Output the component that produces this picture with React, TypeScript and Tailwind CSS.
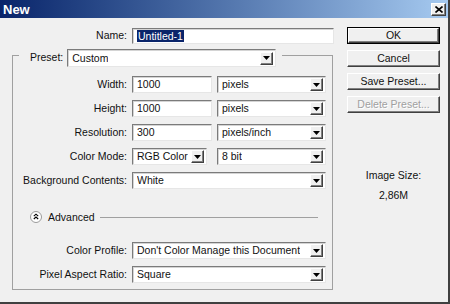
import React from 'react';

// sunken 3D edge used by text fields and combos
const sunken =
  'bg-white border border-t-[#7b7b7b] border-l-[#7b7b7b] border-b-[#e6e6e6] border-r-[#e6e6e6] shadow-[inset_1px_1px_0_#d4d4d4]';

const raised =
  'bg-[#f0f0f0] border border-t-white border-l-white border-b-[#404040] border-r-[#404040] shadow-[inset_-1px_-1px_0_#808080]';

function ArrowBox() {
  return (
    <div className={`${raised} w-[13px] h-[13px] flex items-center justify-center shrink-0`}>
      <svg width="7" height="4" viewBox="0 0 7 4">
        <path d="M0 0h7L3.5 4z" fill="#000" />
      </svg>
    </div>
  );
}

function Field({ value, width }: { value: string; width: string }) {
  return (
    <div className={`${sunken} ${width} h-[17px] flex items-center pl-[4px] leading-none`}>{value}</div>
  );
}

function Combo({ value, width, h = 'h-[17px]' }: { value: string; width: string; h?: string }) {
  return (
    <div className={`${sunken} ${width} ${h} flex items-center justify-between pl-[4px] pr-[2px] leading-none`}>
      <span className="truncate">{value}</span>
      <ArrowBox />
    </div>
  );
}

function Row({ label, children }: { label: string; children: React.ReactNode }) {
  return (
    <div className="flex items-center h-[17px]">
      <div className="w-[115px] text-right pr-[1px] whitespace-nowrap">{label}</div>
      <div className="ml-[4px] flex items-center gap-[5px]">{children}</div>
    </div>
  );
}

function Button({ label, primary, disabled }: { label: string; primary?: boolean; disabled?: boolean }) {
  const inner = (
    <div
      className={`${raised} h-full w-full flex items-center justify-center leading-none ${
        disabled ? 'text-[#a0a0a0] [text-shadow:1px_1px_0_#fff]' : ''
      }`}
    >
      {label}
    </div>
  );
  return primary ? (
    <div className="h-[17px] w-[93px] border border-black">{inner}</div>
  ) : (
    <div className="h-[17px] w-[93px]">{inner}</div>
  );
}

export default function App() {
  return (
    <div className="w-[450px] h-[304px] bg-[#f0f0f0] border-r-2 border-b-2 border-[#404040] flex flex-col font-['Liberation_Sans',Arial,sans-serif] text-[10.5px] text-[#111] overflow-hidden">
      {/* title bar */}
      <div className="h-[18px] shrink-0 bg-gradient-to-r from-[#0a246a] to-[#a6caf0] flex items-center justify-between pl-[3px] pr-[2px]">
        <span className="text-white font-bold text-[13px] leading-none">New</span>
        <div className={`${raised} w-[15px] h-[13px] flex items-center justify-center`}>
          <svg width="8" height="7" viewBox="0 0 8 7">
            <path d="M0.5 0.5l7 6M7.5 0.5l-7 6" stroke="#000" strokeWidth="1.6" />
          </svg>
        </div>
      </div>

      <div className="flex flex-1">
        {/* left column */}
        <div className="ml-[12px] w-[322px] flex flex-col">
          <div className="mt-[10px] flex items-center h-[16px]">
            <div className="w-[116px] text-right pr-[1px]">Name:</div>
            <div className={`${sunken} ml-[4px] w-[202px] h-[16px] flex items-center pl-[4px]`}>
              <span className="bg-[#0a246a] text-white leading-[12px] px-px">Untitled-1</span>
            </div>
          </div>

          {/* preset group */}
          <div className="mt-[5px] w-[321px] flex flex-col">
            <div className="flex items-start">
              <div className="w-[7px] h-[12px] mt-[6px] border-t border-l border-[#a0a0a0]" />
              <div className="ml-[11px] flex items-center h-[18px]">
                <span>Preset:</span>
                <div className="ml-[4px]">
                  <Combo value="Custom" width="w-[209px]" h="h-[18px]" />
                </div>
              </div>
              <div className="ml-[6px] flex-1 h-[12px] mt-[6px] border-t border-r border-[#a0a0a0]" />
            </div>
            <div className="border-l border-r border-b border-[#a0a0a0] pt-[9px] pb-[6px] flex flex-col">
              <div className="flex flex-col gap-[7px]">
                <Row label="Width:">
                  <Field value="1000" width="w-[80px]" />
                  <Combo value="pixels" width="w-[109px]" />
                </Row>
                <Row label="Height:">
                  <Field value="1000" width="w-[80px]" />
                  <Combo value="pixels" width="w-[109px]" />
                </Row>
                <Row label="Resolution:">
                  <Field value="300" width="w-[80px]" />
                  <Combo value="pixels/inch" width="w-[109px]" />
                </Row>
                <Row label="Color Mode:">
                  <Combo value="RGB Color" width="w-[75px]" />
                  <div className="ml-[5px]">
                    <Combo value="8 bit" width="w-[109px]" />
                  </div>
                </Row>
                <Row label="Background Contents:">
                  <Combo value="White" width="w-[194px]" />
                </Row>
              </div>

              {/* advanced */}
              <div className="mt-[22px] h-[12px] flex items-center pl-[17px] pr-[14px]">
                <svg width="12" height="12" viewBox="0 0 12 12" className="shrink-0">
                  <circle cx="6" cy="6" r="5.5" fill="#fff" stroke="#9a9a9a" />
                  <path d="M3.8 5.2L6 3.2l2.2 2M3.8 8L6 6l2.2 2" fill="none" stroke="#000" strokeWidth="1.1" />
                </svg>
                <span className="ml-[6px] leading-none">Advanced</span>
                <div className="ml-[5px] flex-1 h-px bg-[#a0a0a0]" />
              </div>

              <div className="mt-[19px] flex flex-col gap-[7px]">
                <Row label="Color Profile:">
                  <Combo value="Don't Color Manage this Document" width="w-[194px]" />
                </Row>
                <Row label="Pixel Aspect Ratio:">
                  <Combo value="Square" width="w-[194px]" />
                </Row>
              </div>
            </div>
          </div>
        </div>

        {/* right column */}
        <div className="ml-[13px] w-[93px] flex flex-col items-center">
          <div className="mt-[9px] flex flex-col gap-[6px]">
            <Button label="OK" primary />
            <Button label="Cancel" />
            <Button label="Save Preset..." />
            <Button label="Delete Preset..." disabled />
          </div>
          <div className="mt-[56px] leading-[13px] text-center">Image Size:</div>
          <div className="mt-[7px] leading-[13px] text-center">2,86M</div>
        </div>
      </div>
    </div>
  );
}
